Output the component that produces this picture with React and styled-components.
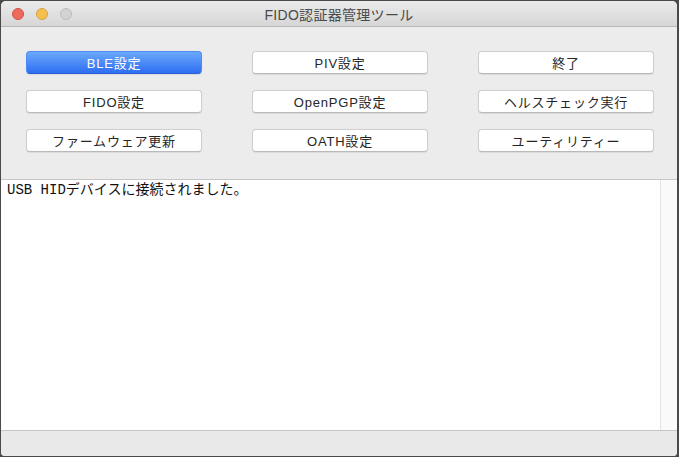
import React from "react";
import styled, { createGlobalStyle, css } from "styled-components";

const Global = createGlobalStyle`
  html, body { margin: 0; padding: 0; background: #4a4a4a; }
  #root { width: 679px; height: 457px; }
`;

const Frame = styled.div`
  width: 679px;
  height: 457px;
  box-sizing: border-box;
  padding: 1px 2px 1px 1px;
  background: #4a4a4a;
`;

const Window = styled.div`
  height: 100%;
  display: flex;
  flex-direction: column;
  border-radius: 5px 5px 4px 4px;
  overflow: hidden;
  background: #ececec;
`;

const TitleBar = styled.div`
  height: 26px;
  box-sizing: border-box;
  border-bottom: 1px solid #b8b8b8;
  background: linear-gradient(#ebebeb, #d6d6d6);
  display: grid;
  grid-template-columns: 1fr auto 1fr;
  align-items: center;
  padding-top: 1px;
`;

const Lights = styled.div`
  display: flex;
  gap: 12px;
  padding-left: 11px;
`;

const Light = styled.span`
  width: 12px;
  height: 12px;
  box-sizing: border-box;
  border-radius: 50%;
  background: ${(p) => p.$bg};
  border: 0.5px solid ${(p) => p.$bd};
`;

const Title = styled.div`
  font-family: "Liberation Sans", "Noto Sans CJK JP", sans-serif;
  font-size: 14px;
  color: #4a4a4a;
  letter-spacing: 0.3px;
`;

const Panel = styled.div`
  height: 153px;
  box-sizing: border-box;
  border-bottom: 1px solid #c6c6c6;
  padding: 24px 0 0 25px;
  display: grid;
  grid-template-columns: repeat(3, 176px);
  grid-auto-rows: 23px;
  column-gap: 50px;
  row-gap: 16px;
  background: #ececec;
`;

const Button = styled.button`
  margin: 0;
  padding: 0;
  box-sizing: border-box;
  height: 23px;
  border-radius: 4px;
  font-family: "Liberation Sans", "Noto Sans CJK JP", sans-serif;
  font-size: 13px;
  letter-spacing: 0.8px;
  color: #262626;
  background: #ffffff;
  border: 1px solid #cfcfcf;
  border-bottom-color: #b9b9b9;
  box-shadow: 0 0.5px 1px rgba(0, 0, 0, 0.08);
  ${(p) =>
    p.$primary &&
    css`
      color: #ffffff;
      background: linear-gradient(#6aa9fb, #2e6ef2);
      border-color: #4f8cf5;
      border-bottom-color: #2a5fd6;
    `}
`;

const LogArea = styled.div`
  flex: 1;
  display: flex;
  background: #ffffff;
`;

const LogText = styled.div`
  flex: 1;
  padding: 2px 6px;
  font-family: "Liberation Mono", "Noto Sans CJK JP", monospace;
  font-size: 14px;
  line-height: 17px;
  color: #111;
`;

const ScrollTrack = styled.div`
  width: 16px;
  background: #fafafa;
  border-left: 1px solid #e2e2e2;
`;

const StatusBar = styled.div`
  height: 26px;
  box-sizing: border-box;
  border-top: 1px solid #c6c6c6;
  background: #e9e9e9;
`;

const buttons = [
  { label: "BLE設定", primary: true },
  { label: "PIV設定" },
  { label: "終了" },
  { label: "FIDO設定" },
  { label: "OpenPGP設定" },
  { label: "ヘルスチェック実行" },
  { label: "ファームウェア更新" },
  { label: "OATH設定" },
  { label: "ユーティリティー" },
];

export default function App() {
  return (
    <Frame>
      <Global />
      <Window>
        <TitleBar>
          <Lights>
            <Light $bg="#ed6a5e" $bd="#d14f44" />
            <Light $bg="#f5bf4f" $bd="#d7a33f" />
            <Light $bg="#d3d3d3" $bd="#bdbdbd" />
          </Lights>
          <Title>FIDO認証器管理ツール</Title>
          <div />
        </TitleBar>
        <Panel>
          {buttons.map((b) => (
            <Button key={b.label} $primary={b.primary}>
              {b.label}
            </Button>
          ))}
        </Panel>
        <LogArea>
          <LogText>USB HIDデバイスに接続されました。</LogText>
          <ScrollTrack />
        </LogArea>
        <StatusBar />
      </Window>
    </Frame>
  );
}
